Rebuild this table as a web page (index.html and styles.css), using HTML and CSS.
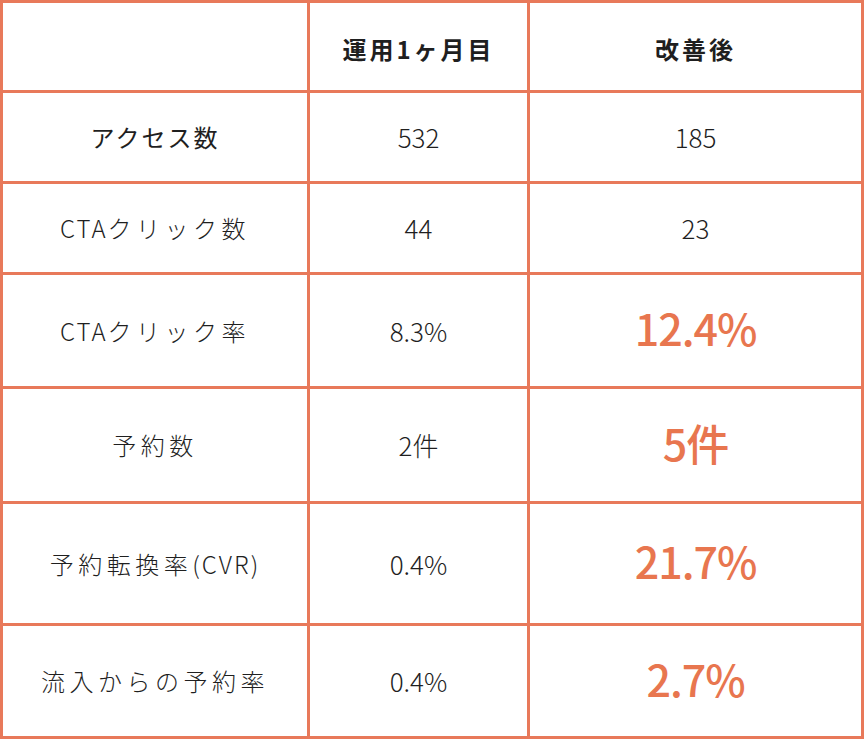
FILE: index.html
```html
<!DOCTYPE html>
<html lang="ja">
<head>
<meta charset="utf-8">
<link rel="stylesheet" href="styles.css">
</head>
<body>
<div class="table">
  <div class="cell head r0"></div>
  <div class="cell head r0">運用1ヶ月目</div>
  <div class="cell head r0">改善後</div>

  <div class="cell label strong r1">アクセス数</div>
  <div class="cell num r1">532</div>
  <div class="cell num r1">185</div>

  <div class="cell label r2"><span class="latin">CTA</span>クリック数</div>
  <div class="cell num r2">44</div>
  <div class="cell num r2">23</div>

  <div class="cell label r3"><span class="latin">CTA</span>クリック率</div>
  <div class="cell num r3">8.3%</div>
  <div class="cell big r3">12.4%</div>

  <div class="cell label r4">予約数</div>
  <div class="cell num r4">2件</div>
  <div class="cell big r4">5件</div>

  <div class="cell label r5">予約転換率<span class="latin">(CVR)</span></div>
  <div class="cell num r5">0.4%</div>
  <div class="cell big r5">21.7%</div>

  <div class="cell label r6">流入からの予約率</div>
  <div class="cell num r6">0.4%</div>
  <div class="cell big r6">2.7%</div>
</div>
</body>
</html>
```
FILE: styles.css
```css
html, body {
  margin: 0;
  padding: 0;
  background: #ffffff;
}
body {
  font-family: "Noto Sans CJK JP", "Noto Sans", sans-serif;
  color: #1f1f1f;
}
.table {
  width: 864px;
  box-sizing: border-box;
  display: grid;
  grid-template-columns: 304px 217px 331px;
  grid-template-rows: 87px 88px 88px 111px 112px 119px 110px;
  gap: 3px;
  padding: 3px;
  background: #e8795a;
}
.cell {
  background: #ffffff;
  display: flex;
  align-items: center;
  justify-content: center;
  font-size: 24px;
  line-height: 1;
  white-space: pre;
}
.head {
  font-weight: 700;
  letter-spacing: 3px;
  padding-top: 4px;
}
.label {
  font-weight: 300;
  letter-spacing: 4.5px;
}
.label .latin {
  letter-spacing: 2px;
}
.label.strong {
  font-weight: 400;
  letter-spacing: 2px;
}
.num {
  font-weight: 300;
  font-size: 26px;
}
.big {
  color: #e8764f;
  font-weight: 500;
  font-size: 43px;
  letter-spacing: -1px;
  padding-bottom: 6px;
}
```
